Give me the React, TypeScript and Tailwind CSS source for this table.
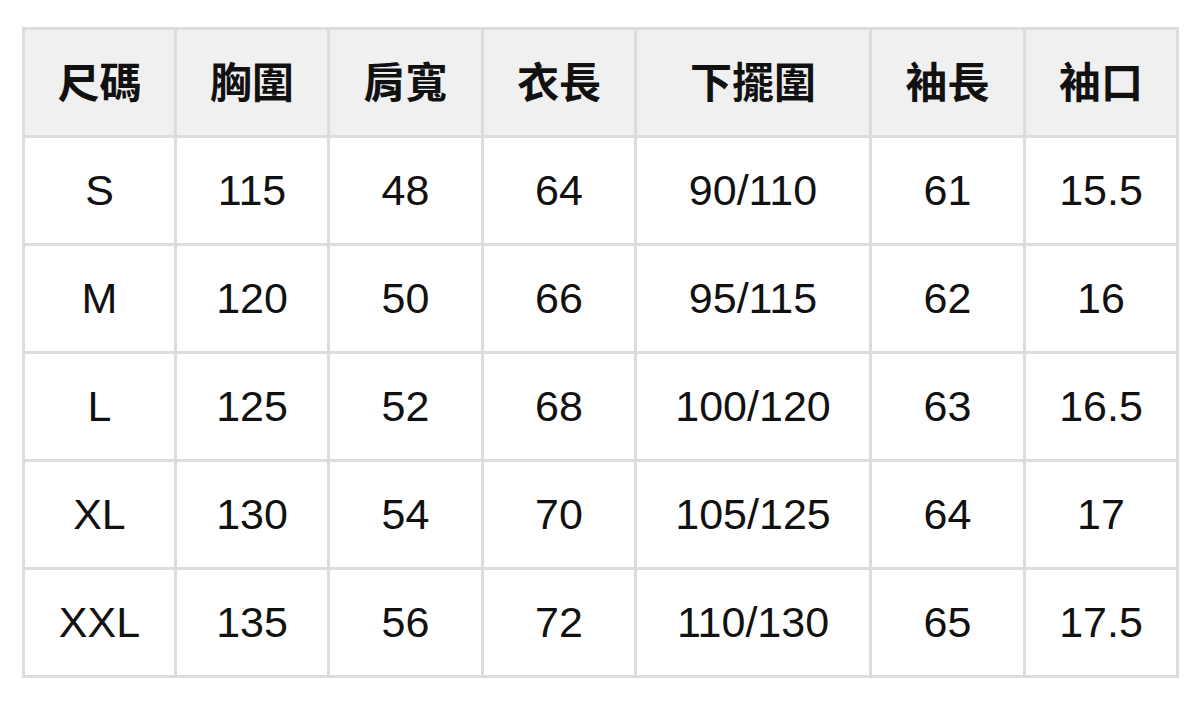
import React from "react";

const headers = ["尺碼", "胸圍", "肩寬", "衣長", "下擺圍", "袖長", "袖口"];
const rows = [
  ["S", "115", "48", "64", "90/110", "61", "15.5"],
  ["M", "120", "50", "66", "95/115", "62", "16"],
  ["L", "125", "52", "68", "100/120", "63", "16.5"],
  ["XL", "130", "54", "70", "105/125", "64", "17"],
  ["XXL", "135", "56", "72", "110/130", "65", "17.5"],
];

export default function App() {
  return (
    <div className="w-[1200px] h-[712px] bg-white pt-[27px] pl-[22px]">
      <div className="inline-grid grid-cols-[149px_150px_151px_150px_232px_151px_150px] auto-rows-[105px] gap-[3px] p-[3px] bg-[#dcdcdc]">
        {headers.map((h) => (
          <div
            key={h}
            className="bg-[#f0f0f0] flex items-center justify-center pb-[6px] text-[42px] font-bold text-[#111111] [font-family:'Noto_Sans_CJK_TC','Noto_Sans_CJK_SC',sans-serif]"
          >
            {h}
          </div>
        ))}
        {rows.map((r, i) =>
          r.map((c, j) => (
            <div
              key={i + "-" + j}
              className="bg-white flex items-center justify-center text-[43px] text-[#111111] [font-family:'Liberation_Sans',Arial,sans-serif]"
            >
              {c}
            </div>
          ))
        )}
      </div>
    </div>
  );
}
